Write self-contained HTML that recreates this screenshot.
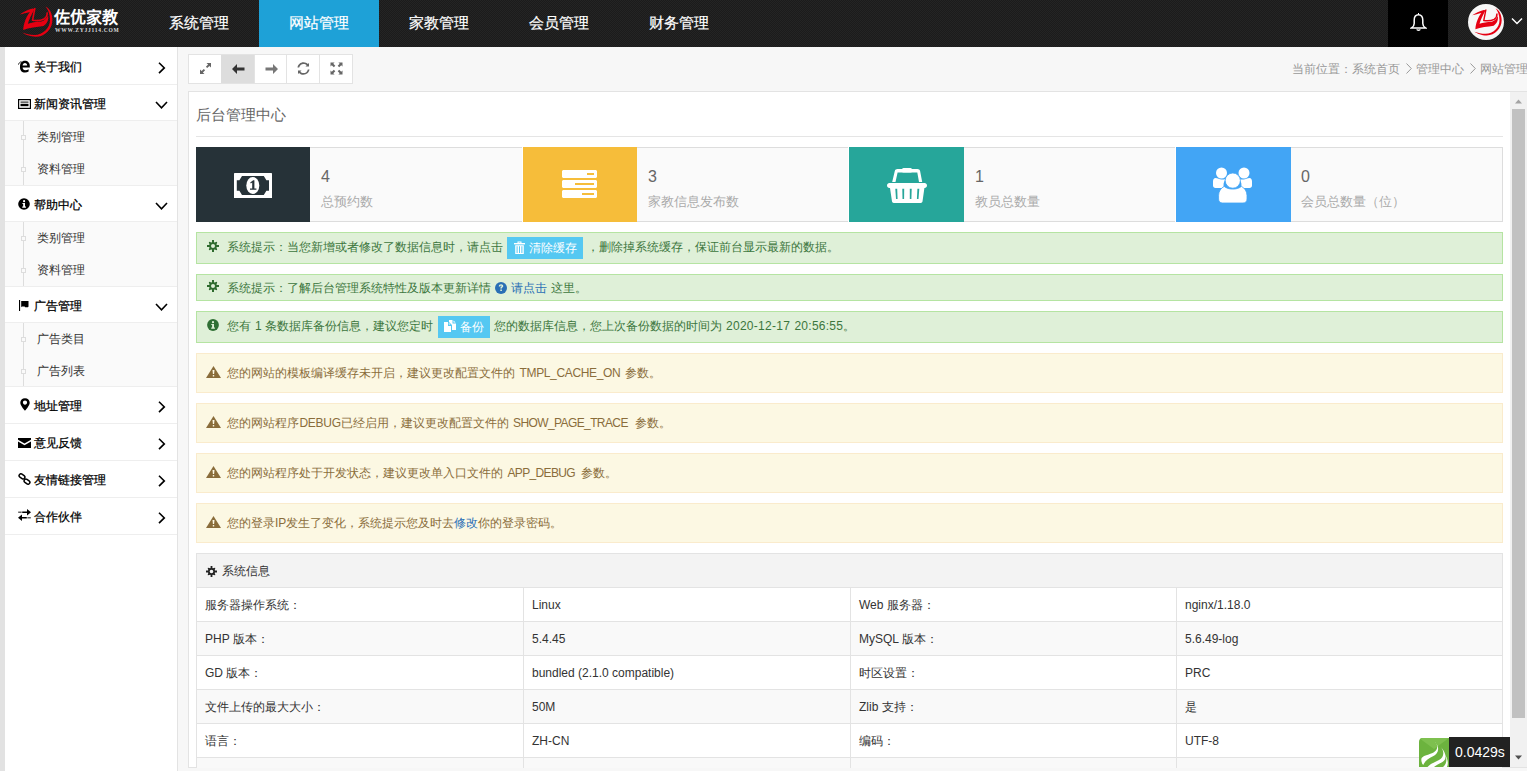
<!DOCTYPE html>
<html><head><meta charset="utf-8">
<style>
*{margin:0;padding:0;box-sizing:border-box}
html,body{width:1527px;height:771px;overflow:hidden;font-family:"Liberation Sans",sans-serif;font-size:12px;background:#f7f7f7;color:#333;position:relative}
div,span,svg{position:absolute}
#hdr{left:0;top:0;width:1527px;height:47px;background:#1f1f1f repeating-conic-gradient(#1b1b1b 0 25%,#242424 0 50%) 0 0/2px 2px}
.nav{-webkit-text-stroke:0.2px #fff;top:0;height:47px;width:120px;color:#fff;font-size:15px;line-height:45px;text-align:center}
.nav.on{background:#1ea1d7}
#bell{left:1388px;top:0;width:60px;height:47px;background:#000}
#side{left:0;top:47px;width:178px;height:724px;background:#fff;border-left:5px solid #e2e2e2;border-right:1px solid #e3e3e3}
.mi{left:0;width:172px;border-bottom:1px solid #eee;color:#000;font-size:12px}
.mi .t{-webkit-text-stroke:0.25px #000;left:29px;top:50%;margin-top:-7px;line-height:16px;white-space:nowrap}
.mi svg.i{left:13px;top:50%;margin-top:-5px}
.mi.f .t{margin-top:-6px}.mi.f svg.i{margin-top:-4px}
.mi svg.c{left:152px;top:50%;margin-top:-4px}
.mi.f svg.c{margin-top:-3px}
.sub{left:0;width:172px;background:#fafafa;border-bottom:1px solid #eee}
.sub .vl{left:18px;top:0;bottom:0;width:1px;background:#ddd}
.si{left:32px;color:#333;font-size:12px;line-height:16px;white-space:nowrap}
.sq{left:16px;width:5px;height:5px;border:1px solid #ddd;background:#fafafa}

#tb{left:188px;top:54px;width:165px;height:30px;border:1px solid #e3e3e3;background:#fff}
#tb .b{top:0;height:28px;border-right:1px solid #e3e3e3}
#bc{color:#999;font-size:12px;line-height:16px;white-space:nowrap}
#frame{left:188px;top:91px;width:1339px;height:677px;background:#fff;border-left:1px solid #e3e3e3;border-top:1px solid #e3e3e3;border-bottom:1px solid #e3e3e3;overflow:hidden}
#ttl{left:196px;top:106px;color:#666;font-size:15px;line-height:18px;white-space:nowrap}
#hr{left:196px;top:136px;width:1307px;height:1px;background:#e5e5e5}
.ic{top:147px;width:114px;height:75px}
.ct{top:147px;height:75px;background:#fafafa;border-top:1px solid #ddd;border-bottom:1px solid #ddd}
.num{top:167px;color:#666;font-size:16px;line-height:20px}
.lab{top:194px;color:#aaa;font-size:13px;line-height:16px;white-space:nowrap}
.al{left:196px;width:1307px;font-size:12px;white-space:nowrap}
.al.g{background:#dff0d8;border:1px solid #b5e4a2;color:#3c763d}
.al.y{background:#fcf8e3;border:1px solid #faebcc;color:#8a6d3b}
.al .tx{left:30px;line-height:16px;word-spacing:0.7px}
.al svg{left:10px}
.btn{background:#55c8f2;color:#fff;height:22px}
#tbl{left:196px;top:553px;width:1307px;height:230px;border:1px solid #e3e3e3;background:#fff}
.tr{left:0;width:1305px;height:34px;border-bottom:1px solid #e3e3e3}
.tr span{top:1px;line-height:33px;color:#333;font-size:12px;white-space:nowrap}
.vc{top:34px;bottom:0;width:1px;background:#e3e3e3}
#sb{left:1510px;top:92px;width:17px;height:675px;background:#f1f1f1}
</style></head><body>
<div id="hdr">
  <svg style="left:15px;top:3px" width="40" height="40" viewBox="0 0 40 40"><path d="M4.7 11.4 C8 9.2 13 6.8 17.5 5.6 L19.6 5.9 C17 10.5 14 16.5 12.8 20.8 C16.5 19.6 21 19 26.5 18.6 C29.8 17.4 32 15.2 33 12.3 C34 16.5 32.2 20.8 28.5 23 C22 24 14 24.6 8.2 27 C8.6 20 11.5 13.5 14.8 9 C11.5 9.8 7.8 10.9 4.7 11.4 Z" fill="#e60012"/><path d="M19.9 5 C19.2 9 18.3 13 17.6 17.2 C21.5 17.9 26 17.5 29 16 C31.2 14.6 32.3 12.2 32.2 9.4" fill="none" stroke="#e60012" stroke-width="1.6"/><path d="M30.6 3.6 C35 6 37.4 11 37.4 17 C37.4 26 30 33.8 20.8 33.8 C15 33.8 10 31.5 7.3 29.6 C11 31 15 32 19.5 32 C28 32 35 25 35 17 C35 11 33 6.5 30.6 3.6 Z" fill="#e60012"/></svg>
  <div lang="zh-CN" style="left:54px;top:8px;width:66px;height:20px;color:#fff;font-family:'Liberation Serif',serif;font-size:16px;font-weight:bold;line-height:20px;letter-spacing:0px;white-space:nowrap">佐优家教</div>
  <div style="left:55px;top:27px;width:64px;height:7px;color:#ddd;font-family:'Liberation Serif',serif;font-size:5.5px;font-weight:bold;line-height:7px;letter-spacing:0.75px;white-space:nowrap">WWW.ZYJJ114.COM</div>
  <div class="nav" style="left:139px">系统管理</div>
  <div class="nav on" style="left:259px">网站管理</div>
  <div class="nav" style="left:379px">家教管理</div>
  <div class="nav" style="left:499px">会员管理</div>
  <div class="nav" style="left:619px">财务管理</div>
  <div id="bell">
    <svg style="left:22px;top:13px" width="17" height="18" viewBox="0 0 17 18"><path d="M8.5 1.8 C5.6 1.8 4.2 4 4.2 7.2 L4.2 10.6 C4.2 12.6 2.8 14.2 1.5 15 L15.5 15 C14.2 14.2 12.8 12.6 12.8 10.6 L12.8 7.2 C12.8 4 11.4 1.8 8.5 1.8 Z" fill="none" stroke="#fff" stroke-width="1.5"/><path d="M7 16.2 C7 17.6 10 17.6 10 16.2" fill="none" stroke="#fff" stroke-width="1.4"/><rect x="8" y="0" width="1" height="2" fill="#fff"/></svg>
  </div>
  <div style="left:1468px;top:4px;width:36px;height:36px;border-radius:50%;background:#f7f7f7;overflow:hidden">
    <svg style="left:0px;top:1px" width="36" height="36" viewBox="0 0 40 40"><path d="M4.7 11.4 C8 9.2 13 6.8 17.5 5.6 L19.6 5.9 C17 10.5 14 16.5 12.8 20.8 C16.5 19.6 21 19 26.5 18.6 C29.8 17.4 32 15.2 33 12.3 C34 16.5 32.2 20.8 28.5 23 C22 24 14 24.6 8.2 27 C8.6 20 11.5 13.5 14.8 9 C11.5 9.8 7.8 10.9 4.7 11.4 Z" fill="#e60012"/><path d="M19.9 5 C19.2 9 18.3 13 17.6 17.2 C21.5 17.9 26 17.5 29 16 C31.2 14.6 32.3 12.2 32.2 9.4" fill="none" stroke="#e60012" stroke-width="1.6"/><path d="M30.6 3.6 C35 6 37.4 11 37.4 17 C37.4 26 30 33.8 20.8 33.8 C15 33.8 10 31.5 7.3 29.6 C11 31 15 32 19.5 32 C28 32 35 25 35 17 C35 11 33 6.5 30.6 3.6 Z" fill="#e60012"/></svg>
  </div>
  <svg style="left:1511px;top:17px" width="12" height="9" viewBox="0 0 12 9"><path d="M1 1.5 L6 6.5 L11 1.5" fill="none" stroke="#fff" stroke-width="1.5"/></svg>
</div>

<div id="side">
  <div class="mi f" style="top:0;height:38px">
    <svg class="i" style="left:13px;top:13px;margin:0" width="12" height="13" viewBox="0 0 12 13"><path d="M2 6.5 C2 3 3.8 0.8 6.8 0.8 C9.8 0.8 11.8 2.8 11.8 6 V7.6 H4.6 C4.8 9.4 5.7 10.3 7.3 10.3 C8.5 10.3 9.6 9.9 10.6 9.2 V11.6 C9.6 12.3 8.4 12.6 7 12.6 C3.9 12.6 2 10.4 2 7.2 Z M4.6 5.6 H9.2 C9.2 3.9 8.3 3 6.9 3 C5.6 3 4.8 3.9 4.6 5.6 Z" fill="#000" fill-rule="evenodd"/><path d="M0.4 4.6 C0.9 3 2 2 3.4 1.6" stroke="#000" stroke-width="0.9" fill="none"/></svg>
    <span class="t" style="margin-top:-7px">关于我们</span>
    <svg style="margin-top:-4px" class="c" width="10" height="12" viewBox="0 0 10 12"><path d="M2 0.7 L7.3 5.9 L2 11.1" fill="none" stroke="#000" stroke-width="1.6"/></svg>
  </div>
  <div class="mi f" style="top:37px;height:37px">
    <svg class="i" style="left:13px;top:15px;margin:0" width="13" height="10" viewBox="0 0 13 10"><rect x="0.6" y="0.6" width="11.8" height="8.8" fill="none" stroke="#000" stroke-width="1.2"/><rect x="2.5" y="2.6" width="8" height="1" fill="#000"/><rect x="2.5" y="4.8" width="8" height="2.4" fill="#000"/></svg>
    <span class="t">新闻资讯管理</span>
    <svg class="c" width="13" height="9" viewBox="0 0 13 9" style="left:150px;margin-top:-1px"><path d="M1 1 L6.5 6.8 L12 1" fill="none" stroke="#000" stroke-width="1.6"/></svg>
  </div>
  <div class="sub" style="top:74px;height:65px">
    <div class="vl"></div>
    <div class="sq" style="top:14px"></div><span class="si" style="top:8px">类别管理</span>
    <div class="sq" style="top:46px"></div><span class="si" style="top:40px">资料管理</span>
  </div>
  <div class="mi f" style="top:139px;height:36px">
    <svg class="i" style="left:13px;top:12px;margin:0" width="12" height="12" viewBox="0 0 13 13"><circle cx="6.5" cy="6.5" r="6.3" fill="#000"/><circle cx="6.6" cy="3.4" r="1.2" fill="#fff"/><path d="M4.8 5.4 H7.6 V9.3 H8.6 V10.6 H4.6 V9.3 H5.6 V6.6 H4.8 Z" fill="#fff"/></svg>
    <span class="t" style="margin-top:-7px">帮助中心</span>
    <svg class="c" width="13" height="9" viewBox="0 0 13 9" style="left:150px;margin-top:-2px"><path d="M1 1 L6.5 6.8 L12 1" fill="none" stroke="#000" stroke-width="1.6"/></svg>
  </div>
  <div class="sub" style="top:175px;height:65px">
    <div class="vl"></div>
    <div class="sq" style="top:14px"></div><span class="si" style="top:8px">类别管理</span>
    <div class="sq" style="top:46px"></div><span class="si" style="top:40px">资料管理</span>
  </div>
  <div class="mi f" style="top:240px;height:36px">
    <svg class="i" style="left:13px;top:13px;margin:0" width="12" height="12" viewBox="0 0 12 12"><rect x="1" y="0" width="1.1" height="11" fill="#000"/><path d="M3.2 1 H10.5 V6.2 C10.5 6.9 10 7.2 9.4 7.2 H7.2 L6.6 6.6 H4 L3.2 7.2 Z" fill="#000"/></svg>
    <span class="t" style="margin-top:-7px">广告管理</span>
    <svg class="c" width="13" height="9" viewBox="0 0 13 9" style="left:150px;margin-top:-2px"><path d="M1 1 L6.5 6.8 L12 1" fill="none" stroke="#000" stroke-width="1.6"/></svg>
  </div>
  <div class="sub" style="top:276px;height:64px">
    <div class="vl"></div>
    <div class="sq" style="top:14px"></div><span class="si" style="top:8px">广告类目</span>
    <div class="sq" style="top:46px"></div><span class="si" style="top:40px">广告列表</span>
  </div>
  <div class="mi" style="top:340px;height:37px">
    <svg class="i" style="left:15px;top:11px;margin:0" width="10" height="13" viewBox="0 0 10 13"><path d="M5 0.2 C2.2 0.2 0.3 2.2 0.3 4.7 C0.3 7.6 5 12.8 5 12.8 C5 12.8 9.7 7.6 9.7 4.7 C9.7 2.2 7.8 0.2 5 0.2 Z M5 2.5 C6.2 2.5 7.1 3.4 7.1 4.6 C7.1 5.8 6.2 6.7 5 6.7 C3.8 6.7 2.9 5.8 2.9 4.6 C2.9 3.4 3.8 2.5 5 2.5 Z" fill="#000" fill-rule="evenodd"/></svg>
    <span class="t">地址管理</span>
    <svg class="c" width="10" height="12" viewBox="0 0 10 12"><path d="M2 0.7 L7.3 5.9 L2 11.1" fill="none" stroke="#000" stroke-width="1.6"/></svg>
  </div>
  <div class="mi" style="top:377px;height:37px">
    <svg class="i" style="left:13px;top:14px;margin:0" width="13" height="10" viewBox="0 0 13 10"><path d="M0 0 H13 V1.8 L6.5 5.6 L0 1.8 Z M0 3.4 L6.5 7.2 L13 3.4 V10 H0 Z" fill="#000"/></svg>
    <span class="t">意见反馈</span>
    <svg class="c" width="10" height="12" viewBox="0 0 10 12"><path d="M2 0.7 L7.3 5.9 L2 11.1" fill="none" stroke="#000" stroke-width="1.6"/></svg>
  </div>
  <div class="mi" style="top:414px;height:37px">
    <svg class="i" style="left:13px;top:12px;margin:0" width="13" height="12" viewBox="0 0 13 12"><rect x="0.9" y="1.6" width="6.2" height="3.6" rx="1.8" transform="rotate(35 4 3.4)" fill="none" stroke="#000" stroke-width="1.5"/><rect x="5.9" y="6.8" width="6.2" height="3.6" rx="1.8" transform="rotate(35 9 8.6)" fill="none" stroke="#000" stroke-width="1.5"/></svg>
    <span class="t">友情链接管理</span>
    <svg class="c" width="10" height="12" viewBox="0 0 10 12"><path d="M2 0.7 L7.3 5.9 L2 11.1" fill="none" stroke="#000" stroke-width="1.6"/></svg>
  </div>
  <div class="mi" style="top:451px;height:37px">
    <svg class="i" style="left:13px;top:11px;margin:0" width="13" height="12" viewBox="0 0 13 12"><path d="M0.5 3.2 H1.6 M2.4 3.2 H3.4 M4.2 3.2 H9.5" stroke="#000" stroke-width="1.6"/><path d="M9 0 L13 3.2 L9 6.4 Z" fill="#000"/><path d="M12.5 8.8 H11.4 M10.6 8.8 H9.6 M8.8 8.8 H3.5" stroke="#000" stroke-width="1.6"/><path d="M4 5.6 L0 8.8 L4 12 Z" fill="#000"/></svg>
    <span class="t">合作伙伴</span>
    <svg class="c" width="10" height="12" viewBox="0 0 10 12"><path d="M2 0.7 L7.3 5.9 L2 11.1" fill="none" stroke="#000" stroke-width="1.6"/></svg>
  </div>
</div>


<div id="tb">
  <div class="b" style="left:0;width:33px"></div>
  <div class="b" style="left:32px;width:34px;background:#ddd"></div>
  <div class="b" style="left:66px;width:32px"></div>
  <div class="b" style="left:98px;width:33px"></div>
  <svg style="left:10px;top:7px" width="13" height="13" viewBox="0 0 13 13"><path d="M7.5 1 H12 V5.5 L10.4 3.9 L8.2 6.1 L6.9 4.8 L9.1 2.6 Z M5.5 12 H1 V7.5 L2.6 9.1 L4.8 6.9 L6.1 8.2 L3.9 10.4 Z" fill="#666"/></svg>
  <svg style="left:43px;top:9px" width="13" height="10" viewBox="0 0 13 10"><path d="M0 5 L5 0 V3.4 H12.5 V6.6 H5 V10 Z" fill="#333"/></svg>
  <svg style="left:76px;top:9px" width="13" height="10" viewBox="0 0 13 10"><path d="M13 5 L8 0 V3.4 H0.5 V6.6 H8 V10 Z" fill="#777"/></svg>
  <svg style="left:108px;top:7px" width="13" height="13" viewBox="0 0 13 13"><path d="M2.2 5.6 C2.6 3.4 4.4 1.9 6.5 1.9 C7.8 1.9 8.9 2.4 9.7 3.3 L8.5 4.5 H12 V1 L10.9 2.1 C9.8 0.9 8.2 0.2 6.5 0.2 C3.5 0.2 1 2.4 0.5 5.4 Z M10.8 7.4 C10.4 9.6 8.6 11.1 6.5 11.1 C5.2 11.1 4.1 10.6 3.3 9.7 L4.5 8.5 H1 V12 L2.1 10.9 C3.2 12.1 4.8 12.8 6.5 12.8 C9.5 12.8 12 10.6 12.5 7.6 Z" fill="#666"/></svg>
  <svg style="left:141px;top:7px" width="13" height="13" viewBox="0 0 13 13"><path d="M0.5 0.5 H4.6 L3.3 1.8 L5.3 3.8 L3.8 5.3 L1.8 3.3 L0.5 4.6 Z M12.5 0.5 V4.6 L11.2 3.3 L9.2 5.3 L7.7 3.8 L9.7 1.8 L8.4 0.5 Z M0.5 12.5 V8.4 L1.8 9.7 L3.8 7.7 L5.3 9.2 L3.3 11.2 L4.6 12.5 Z M12.5 12.5 H8.4 L9.7 11.2 L7.7 9.2 L9.2 7.7 L11.2 9.7 L12.5 8.4 Z" fill="#666"/></svg>
</div>
<div id="bc" style="left:1292px;top:61px">当前位置：系统首页</div><svg style="left:1406px;top:63px" width="6" height="11" viewBox="0 0 6 11"><path d="M0.5 0.5 L5.3 5.5 L0.5 10.5" fill="none" stroke="#999" stroke-width="1"/></svg><div id="bc" style="left:1416px;top:61px">管理中心</div><svg style="left:1470px;top:63px" width="6" height="11" viewBox="0 0 6 11"><path d="M0.5 0.5 L5.3 5.5 L0.5 10.5" fill="none" stroke="#999" stroke-width="1"/></svg><div id="bc" style="left:1480px;top:61px">网站管理</div>
<div id="frame"></div>
<div id="ttl">后台管理中心</div>
<div id="hr"></div>

<div class="ic" style="left:196px;background:#263238"></div>
<div class="ct" style="left:310px;width:212px"></div>
<div class="num" style="left:321px">4</div><div class="lab" style="left:321px">总预约数</div>
<div class="ic" style="left:523px;background:#f6bd3a"></div>
<div class="ct" style="left:637px;width:211px"></div>
<div class="num" style="left:648px">3</div><div class="lab" style="left:648px">家教信息发布数</div>
<div class="ic" style="left:849px;width:115px;background:#26a69a"></div>
<div class="ct" style="left:964px;width:211px"></div>
<div class="num" style="left:975px">1</div><div class="lab" style="left:975px">教员总数量</div>
<div class="ic" style="left:1176px;width:115px;background:#42a5f5"></div>
<div class="ct" style="left:1291px;width:212px;border-right:1px solid #ddd"></div>
<div class="num" style="left:1301px">0</div><div class="lab" style="left:1301px">会员总数量（位）</div>


<svg style="left:234px;top:173px" width="38" height="25" viewBox="0 0 38 25"><rect x="0" y="0" width="38" height="25" rx="0.6" fill="#fff"/><path d="M8 3 H29.8 L32.4 7.3 H35 V17.8 H32.4 L29.8 22 H8 L5.4 17.8 H2.8 V7.3 H5.4 Z" fill="#263238"/><ellipse cx="18.8" cy="12.5" rx="6.5" ry="8.5" fill="#fff"/><path d="M16.2 9.4 L19.2 7.2 H20.4 V15.6 H22.4 V16.8 H16 V15.6 H18.2 V9.6 L16.8 10.4 Z" fill="#263238"/></svg>
<svg style="left:562px;top:170px" width="35" height="28" viewBox="0 0 35 28"><path d="M1 0 H34 L35 1 V7 L34 8 H1 L0 7 V1 Z M1 10 H34 L35 11 V17 L34 18 H1 L0 17 V11 Z M1 20 H34 L35 21 V27 L34 28 H1 L0 27 V21 Z" fill="#fff"/><rect x="25" y="3" width="7" height="2" fill="#f6bd3a"/><rect x="13" y="13" width="19" height="2" fill="#f6bd3a"/><rect x="20" y="23" width="12" height="2" fill="#f6bd3a"/></svg>
<svg style="left:887px;top:167px" width="41" height="37" viewBox="0 0 41 37"><path d="M5.2 15 L7.8 4 C8.2 2.8 9.2 2.1 10.4 2.1 H30.5 C31.7 2.1 32.7 2.8 33.1 4 L35.2 15 H32 L30.3 5.4 H10.6 L8.5 15 Z" fill="#fff"/><rect x="14.9" y="1" width="10.2" height="4.6" rx="1.6" fill="#fff"/><path d="M2.4 16 H37.6 C38.9 16 40 17.1 40 18.45 C40 19.8 38.9 20.9 37.6 20.9 H37.4 L35.5 34.6 C35.3 35.4 34.7 35.9 33.8 35.9 H6.7 C5.8 35.9 5.2 35.4 5 34.6 L3 20.9 H2.4 C1.1 20.9 0 19.8 0 18.45 C0 17.1 1.1 16 2.4 16 Z" fill="#fff"/><path d="M8.3 21.8 H10.2 L10.6 31.9 H9 Z M15.3 21.8 H17.2 L17.1 31.9 H15.5 Z M22.8 21.8 H24.7 L24.4 31.9 H22.8 Z M30.4 21.8 H32.3 L31.5 31.9 H29.9 Z" fill="#26a69a"/></svg>
<svg style="left:1213px;top:167px" width="39" height="37" viewBox="0 0 39 37"><circle cx="8.5" cy="6" r="5.5" fill="#fff"/><circle cx="31" cy="6" r="5.5" fill="#fff"/><path d="M2.5 11 C1 11 0 12.5 0 14.5 V18.5 C0 20 1 21 2.5 21 H11 C10 18 10.5 14 13 12 C11 12.5 9.5 12.6 8.5 12.5 C6.5 12.3 4.5 11 2.5 11 Z" fill="#fff"/><path d="M36.5 11 C38 11 39 12.5 39 14.5 V18.5 C39 20 38 21 36.5 21 H28 C29 18 28.5 14 26 12 C28 12.5 29.5 12.6 30.5 12.5 C32.5 12.3 34.5 11 36.5 11 Z" fill="#fff"/><circle cx="19.8" cy="13.6" r="7.6" fill="#fff" stroke="#42a5f5" stroke-width="0.8"/><path d="M11.2 19.4 C13.5 21.3 16.5 22.1 19.8 22.1 C23.1 22.1 26.1 21.3 28.4 19.4 C31.8 21 34 24.5 34 28.5 V32 C34 34.5 32.5 36 30 36 H9.6 C7.1 36 5.6 34.5 5.6 32 V28.5 C5.6 24.5 7.8 21 11.2 19.4 Z" fill="#fff" stroke="#42a5f5" stroke-width="0.8"/></svg>
<div class="al g" style="top:232px;height:32px"><svg style="left:10px;top:7px" width="12" height="12" viewBox="0 0 12 12"><path d="M5 0 H7 V2.2 L7.6 2.5 L9.8 1.8 L10.2 2.2 L9.5 4.4 L9.8 5 H12 V7 H9.8 L9.5 7.6 L10.2 9.8 L9.8 10.2 L7.6 9.5 L7 9.8 V12 H5 V9.8 L4.4 9.5 L2.2 10.2 L1.8 9.8 L2.5 7.6 L2.2 7 H0 V5 H2.2 L2.5 4.4 L1.8 2.2 L2.2 1.8 L4.4 2.5 L5 2.2 Z M6 4 A2 2 0 1 0 6 8 A2 2 0 1 0 6 4 Z" fill="#2e6b2e" fill-rule="evenodd"/></svg><span class="tx" style="top:6px">系统提示：当您新增或者修改了数据信息时，请点击</span><div class="btn" style="left:310px;top:4px;width:76px"><svg style="left:7px;top:4px" width="11" height="13" viewBox="0 0 11 13"><rect x="0" y="2" width="11" height="1.4" fill="#fff"/><path d="M3.5 2 V0.6 H7.5 V2 H6.4 V1.5 H4.6 V2 Z" fill="#fff"/><path d="M1.2 4.2 H9.8 V13 H1.2 Z M2.6 5.2 V12 H3.6 V5.2 Z M5 5.2 V12 H6 V5.2 Z M7.4 5.2 V12 H8.4 V5.2 Z" fill="#fff" fill-rule="evenodd"/></svg><span style="left:22px;top:3px;line-height:16px">清除缓存</span></div><span class="tx" style="left:390px;top:6px">，删除掉系统缓存，保证前台显示最新的数据。</span></div>
<div class="al g" style="top:274px;height:27px"><svg style="left:10px;top:5px" width="12" height="12" viewBox="0 0 12 12"><path d="M5 0 H7 V2.2 L7.6 2.5 L9.8 1.8 L10.2 2.2 L9.5 4.4 L9.8 5 H12 V7 H9.8 L9.5 7.6 L10.2 9.8 L9.8 10.2 L7.6 9.5 L7 9.8 V12 H5 V9.8 L4.4 9.5 L2.2 10.2 L1.8 9.8 L2.5 7.6 L2.2 7 H0 V5 H2.2 L2.5 4.4 L1.8 2.2 L2.2 1.8 L4.4 2.5 L5 2.2 Z M6 4 A2 2 0 1 0 6 8 A2 2 0 1 0 6 4 Z" fill="#2e6b2e" fill-rule="evenodd"/></svg><span class="tx" style="top:5px">系统提示：了解后台管理系统特性及版本更新详情</span><svg style="left:298px;top:7px" width="12" height="12" viewBox="0 0 12 12"><circle cx="6" cy="6" r="6" fill="#2a6fb5"/><path d="M3.8 4.4 C3.8 3 4.8 2.2 6.1 2.2 C7.4 2.2 8.3 3 8.3 4.1 C8.3 5.3 7 5.6 6.9 6.6 H5.3 C5.3 5 6.6 4.8 6.6 4.1 C6.6 3.7 6.4 3.5 6 3.5 C5.6 3.5 5.4 3.8 5.4 4.4 Z M5.3 7.5 H6.9 V9 H5.3 Z" fill="#dff0d8"/></svg><span class="tx" style="left:314px;top:5px;color:#2a6fb5">请点击</span><span class="tx" style="left:354px;top:5px">这里。</span></div>
<div class="al g" style="top:311px;height:32px"><svg style="left:10px;top:7px" width="12" height="12" viewBox="0 0 12 12"><circle cx="6" cy="6" r="5.9" fill="#2f6f34"/><circle cx="6" cy="3.2" r="1.1" fill="#dff0d8"/><path d="M4.3 5 H7 V8.6 H7.9 V9.7 H4.2 V8.6 H5.1 V6.1 H4.3 Z" fill="#dff0d8"/></svg><span class="tx" style="top:6px">您有</span><span class="tx" style="left:58px;top:6px">1</span><span class="tx" style="left:68px;top:6px">条数据库备份信息，建议您定时</span><div class="btn" style="left:241px;top:4px;width:52px"><svg style="left:6px;top:4px" width="12" height="12" viewBox="0 0 12 12"><path d="M0 2 H4 V6 H7 V12 H0 Z" fill="#fff"/><path d="M5 0 H8.5 V3.5 H12 V10 H8 V5 L5 2 Z" fill="#fff"/><path d="M9.5 0.4 L11.6 2.5 H9.5 Z M4.8 2.8 L6.4 4.4 H4.8 Z" fill="#fff"/></svg><span style="left:22px;top:3px;line-height:16px">备份</span></div><span class="tx" style="left:297px;top:6px">您的数据库信息，您上次备份数据的时间为</span><span class="tx" style="left:529px;top:6px;letter-spacing:0.27px">2020-12-17 20:56:55</span><span class="tx" style="left:646px;top:6px">。</span></div>
<div class="al y" style="top:353px;height:40px"><svg style="left:9px;top:12px" width="15" height="12" viewBox="0 0 15 12"><path d="M7.5 0 L15 12 H0 Z" fill="#8a6d3b"/><path d="M6.5 4 H8.5 L8.1 8 H6.9 Z M6.8 9 H8.2 V10.4 H6.8 Z" fill="#fcf8e3"/></svg><span class="tx" style="left:30px;top:11px">您的网站的模板编译缓存未开启，建议更改配置文件的</span><span class="tx" style="left:322.5px;top:11px;letter-spacing:-0.35px">TMPL_CACHE_ON</span><span class="tx" style="left:428px;top:11px">参数。</span></div>
<div class="al y" style="top:403px;height:40px"><svg style="left:9px;top:12px" width="15" height="12" viewBox="0 0 15 12"><path d="M7.5 0 L15 12 H0 Z" fill="#8a6d3b"/><path d="M6.5 4 H8.5 L8.1 8 H6.9 Z M6.8 9 H8.2 V10.4 H6.8 Z" fill="#fcf8e3"/></svg><span class="tx" style="left:30px;top:11px">您的网站程序</span><span class="tx" style="left:102.5px;top:11px;letter-spacing:-0.3px">DEBUG</span><span class="tx" style="left:144px;top:11px">已经启用，建议更改配置文件的</span><span class="tx" style="left:316px;top:11px;letter-spacing:-0.6px">SHOW_PAGE_TRACE</span><span class="tx" style="left:438px;top:11px">参数。</span></div>
<div class="al y" style="top:453px;height:40px"><svg style="left:9px;top:12px" width="15" height="12" viewBox="0 0 15 12"><path d="M7.5 0 L15 12 H0 Z" fill="#8a6d3b"/><path d="M6.5 4 H8.5 L8.1 8 H6.9 Z M6.8 9 H8.2 V10.4 H6.8 Z" fill="#fcf8e3"/></svg><span class="tx" style="left:30px;top:11px">您的网站程序处于开发状态，建议更改单入口文件的</span><span class="tx" style="left:310.5px;top:11px;letter-spacing:-0.65px">APP_DEBUG</span><span class="tx" style="left:383.5px;top:11px">参数。</span></div>
<div class="al y" style="top:503px;height:40px"><svg style="left:9px;top:12px" width="15" height="12" viewBox="0 0 15 12"><path d="M7.5 0 L15 12 H0 Z" fill="#8a6d3b"/><path d="M6.5 4 H8.5 L8.1 8 H6.9 Z M6.8 9 H8.2 V10.4 H6.8 Z" fill="#fcf8e3"/></svg><span class="tx" style="top:11px">您的登录IP发生了变化，系统提示您及时去</span><span class="tx" style="left:257px;top:11px;color:#2a6fb5">修改</span><span class="tx" style="left:281px;top:11px">你的登录密码。</span></div>

<div id="tbl">
  <div class="tr" style="top:0;background:#f3f3f3"><svg style="left:9px;top:12px" width="11" height="11" viewBox="0 0 12 12"><path d="M5 0 H7 V2.2 L7.6 2.5 L9.8 1.8 L10.2 2.2 L9.5 4.4 L9.8 5 H12 V7 H9.8 L9.5 7.6 L10.2 9.8 L9.8 10.2 L7.6 9.5 L7 9.8 V12 H5 V9.8 L4.4 9.5 L2.2 10.2 L1.8 9.8 L2.5 7.6 L2.2 7 H0 V5 H2.2 L2.5 4.4 L1.8 2.2 L2.2 1.8 L4.4 2.5 L5 2.2 Z M6 4 A2 2 0 1 0 6 8 A2 2 0 1 0 6 4 Z" fill="#222" fill-rule="evenodd"/></svg><span style="left:25px">系统信息</span></div>
  <div class="tr" style="top:34px"><span style="left:8px">服务器操作系统：</span><span style="left:335px">Linux</span><span style="left:662px">Web 服务器：</span><span style="left:988px">nginx/1.18.0</span></div>
  <div class="tr" style="top:68px;background:#f9f9f9"><span style="left:8px">PHP 版本：</span><span style="left:335px">5.4.45</span><span style="left:662px">MySQL 版本：</span><span style="left:988px">5.6.49-log</span></div>
  <div class="tr" style="top:102px"><span style="left:8px">GD 版本：</span><span style="left:335px">bundled (2.1.0 compatible)</span><span style="left:662px">时区设置：</span><span style="left:988px">PRC</span></div>
  <div class="tr" style="top:136px;background:#f9f9f9"><span style="left:8px">文件上传的最大大小：</span><span style="left:335px">50M</span><span style="left:662px">Zlib 支持：</span><span style="left:988px">是</span></div>
  <div class="tr" style="top:170px"><span style="left:8px">语言：</span><span style="left:335px">ZH-CN</span><span style="left:662px">编码：</span><span style="left:988px">UTF-8</span></div>
  <div class="tr" style="top:204px;background:#f9f9f9"></div>
  <div class="vc" style="left:326px"></div><div class="vc" style="left:653px"></div><div class="vc" style="left:979px"></div>
</div>
<div style="left:178px;top:768px;width:1349px;height:3px;background:#f7f7f7"></div>
<div id="sb">
  <svg style="left:5px;top:7px" width="7" height="5" viewBox="0 0 7 5"><path d="M0 4.5 L3.5 0.5 L7 4.5 Z" fill="#a3a3a3"/></svg>
  <div style="left:2px;top:17px;width:13px;height:609px;background:#c1c1c1"></div>
  <svg style="left:5px;top:663px" width="7" height="5" viewBox="0 0 7 5"><path d="M0 0.5 L3.5 4.5 L7 0.5 Z" fill="#505050"/></svg>
</div>
<div style="left:1419px;top:738px;width:30px;height:29px;background:#6cb33e;border-top-left-radius:4px;overflow:hidden"><svg style="left:0;top:0" width="30" height="29" viewBox="0 0 30 29"><path d="M0 0 H30 L15 11 Z" fill="#7ec04f"/><path d="M15.5 3.2 C19.5 7 19 12.2 14.5 14.6 C10.5 16.8 5.5 17 2.6 20 C1.8 23 2.8 25.5 4.2 27 C6 23 9.5 20 14 18.2 C19.5 16 21.5 9.5 15.5 3.2 Z" fill="#fff"/><path d="M22 9.2 C25.8 14 24.8 19.6 20 22.1 C16 24.2 11.5 25.5 8.5 29 H15 C17 27 20.5 25.8 23.8 23.8 C27.4 21.5 28 15.5 22 9.2 Z" fill="#fff"/><path d="M25.6 16.2 C28.6 21 27.6 26 24 29 H28 C29.4 26 29.2 21 25.6 16.2 Z" fill="#fff"/></svg></div>
<div style="left:1449px;top:737px;width:61px;height:30px;background:#222;color:#fff;font-size:14px;line-height:30px;padding-left:6px">0.0429s</div>
</body></html>
